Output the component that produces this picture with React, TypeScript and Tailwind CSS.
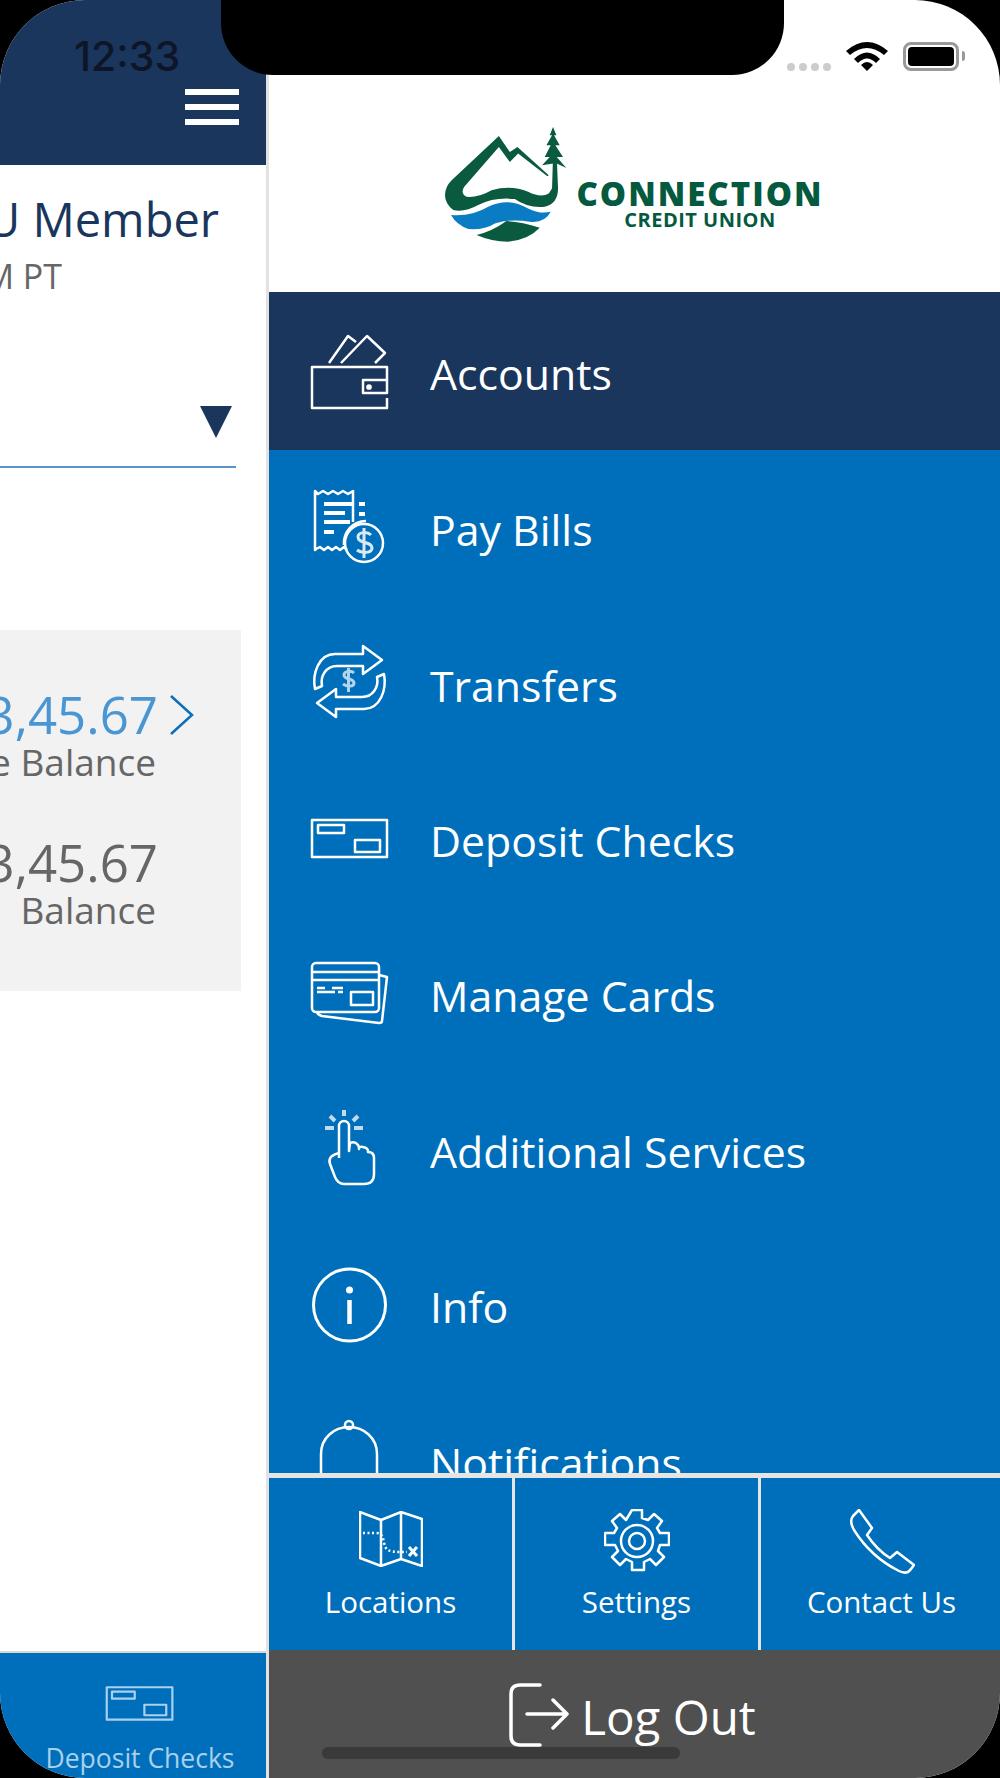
const openSans = { fontFamily: '"Open Sans", "Noto Sans", sans-serif' }

function Icon({ children, className = 'w-20 h-20' }: { children: React.ReactNode; className?: string }) {
  return (
    <svg viewBox="0 0 80 80" fill="none" stroke="currentColor" strokeWidth="2.5" strokeLinejoin="round" className={`${className} shrink-0 overflow-visible`} aria-hidden="true">
      {children}
    </svg>
  )
}

function WalletIcon() {
  return (
    <Icon>
      <path d="M77 49V36H2v41h75V67" />
      <path d="M53 49h24v13H53z" />
      <circle cx="59" cy="56" r="1.6" fill="currentColor" />
      <path d="M19 32 38 5l8 6M31 32 57 5l18 17-10 10" />
    </Icon>
  )
}

function BillIcon() {
  return (
    <Icon>
      <path d="M37 62l-3-3-4 3-4-3-4 3-4-3-4 3-4-3-4 2-1 1V3l3 3 5-3 5 3 5-3 5 3 5-3 5 3 5-3v31" />
      <path strokeWidth="4" d="M14 16h28M49 16h6M14 25h21M49 26h6M14 34h26M14 44h10" />
      <path d="M56 33a22 22 0 0 0-22 24" />
      <circle cx="54" cy="55" r="19" />
      <path strokeWidth="3" opacity="0.85" d="M61 47c-4-4-13-3-13 2 0 7 14 4 14 11 0 5-10 6-15 2M54 40v30" />
    </Icon>
  )
}

function TransferIcon() {
  const arrow = 'M5 44C2 28 9 9 25 9h28V1l19 14-19 14v-8H27c-11 0-17 10-15 20z'
  return (
    <Icon>
      <g transform="translate(0 2)">
        <path d={arrow} />
        <path d={arrow} transform="rotate(180 39.5 36.5)" />
        <path strokeWidth="3" opacity="0.7" d="M44 28c-3-3-10-2-10 2 0 5 10 3 10 8 0 4-7 4-11 1M38.500 23v24" />
      </g>
    </Icon>
  )
}

function EnvelopeIcon({ className }: { className?: string }) {
  return (
    <Icon className={className}>
      <path d="M2 22h75v37H2zM8 27h26v8H8zM45 42h25v12H45z" />
    </Icon>
  )
}

function CardsIcon() {
  return (
    <Icon>
      <g transform="translate(0 2)">
        <rect x="2" y="7" width="67" height="49" rx="4" />
        <path d="M2 16h67M2 24h67M41 36h22v13H41zM7 32h8M22 32h11M7 36h18M28 36h5" />
        <path d="M69 19l8 2-5 44q0 2-3 2L12 60q-4-1-5-4" />
      </g>
    </Icon>
  )
}

function TapIcon() {
  return (
    <Icon>
      <g transform="translate(0 1)">
        <path d="M29 48V16a5 5 0 0 1 10 0v25l1-8q5-2 8 2 1 1 1 4 0-3 4-2 5 1 5 4v1q6 0 6 6v16q0 10-10 10H34q-6 0-9-7l-5-13q-3-8 9-11" />
        <path strokeWidth="4" opacity="0.75" d="M34 0v6M15 18h9M44 18h9M20 6l5 5M48 6l-5 5" />
      </g>
    </Icon>
  )
}

function InfoIcon() {
  return (
    <Icon>
      <circle cx="39.500" cy="40" r="36" strokeWidth="3" />
      <circle cx="39.500" cy="25" r="3.500" fill="currentColor" stroke="none" />
      <path strokeWidth="4.500" d="M39.500 35v24" />
    </Icon>
  )
}

function BellIcon() {
  return (
    <Icon>
      <circle cx="39" cy="5" r="4" />
      <path d="M11 62V34C11 18 24 7 39 7s28 11 28 27v28" />
      <path d="M5 70q6-3 6-8M73 70q-6-3-6-8M5 70h68" />
    </Icon>
  )
}

function MapIcon() {
  return (
    <svg viewBox="0 0 64 56" fill="none" stroke="currentColor" strokeWidth="2.500" strokeLinejoin="round" className="w-16 h-14" aria-hidden="true">
      <path d="M1 1l21 8 20-8 21 7v47l-21-7-20 7-21-8zM22 9v46M42 1v47" />
      <path strokeDasharray="2 2.500" d="M4 22h13c8 0 7 8 9 13 2 7 12 6 22 6" />
      <path strokeWidth="3" d="M50 36l8 9M58 36l-8 9" />
    </svg>
  )
}

function GearIcon() {
  return (
    <svg viewBox="0 0 66 66" fill="none" stroke="currentColor" strokeWidth="2.500" strokeLinejoin="round" className="w-[66px] h-[66px]" aria-hidden="true">
      <path d="M28 1h10v8l6 2 6-6 8 7-5 7 3 5h9v12h-9l-2 6 6 6-8 8-6-6-6 3v8H28v-8l-6-3-6 6-8-8 6-6-3-6H1V24h9l3-5-5-7 8-7 6 6z" />
      <circle cx="33" cy="32" r="16" />
      <circle cx="33" cy="32" r="8" />
    </svg>
  )
}

function PhoneIcon() {
  return (
    <svg viewBox="0 0 66 66" fill="none" stroke="currentColor" strokeWidth="2.500" strokeLinejoin="round" className="w-[66px] h-[66px]" aria-hidden="true">
      <path d="M10 1L4 7Q0 12 5 21Q22 48 50 62Q58 66 62 60L65 56 48 43 41 49Q28 41 18 26L23 19z" />
    </svg>
  )
}

function Logo() {
  return (
    <div className="flex items-end text-[#04593f]">
      <svg viewBox="50 50 370 350" className="w-[123px] h-[117px]" aria-hidden="true">
        <path fill="#0a5a40" d="M212 82 245 130 268 115 362 200 358 203 270 135 245 160 212 115 108 235Q95 255 115 265 150 268 190 245 250 228 300 250 340 270 362 255L372 240 375 140H386L390 240Q390 285 350 295 300 300 260 272 200 265 150 290 110 312 75 305 50 285 50 260 50 235 70 215Z" />
        <path fill="#0a7cc4" d="M68 320Q130 325 180 295 240 265 300 300 335 318 368 310 350 345 305 340 250 330 200 345 170 365 120 362 85 350 68 320Z" />
        <path fill="#0a5a40" d="M145 380Q190 370 235 338 280 340 335 358 300 395 240 400 190 400 145 380Z" />
        <path fill="#0a5a40" d="M375 55 385 80H378L395 110H382L405 145H386L415 178 386 165H376L342 170 365 145H350L368 110H355L372 80H365Z" />
      </svg>
      <div className="flex flex-col items-center ml-[8px] mb-[11px]" style={openSans}>
        <span className="text-[33px] leading-[31px] font-extrabold tracking-[2px]">CONNECTION</span>
        <span className="text-[20px] leading-[22px] font-bold tracking-[0.5px]">CREDIT UNION</span>
      </div>
    </div>
  )
}

const menuItems = [
  { label: 'Pay Bills', icon: <BillIcon /> },
  { label: 'Transfers', icon: <TransferIcon /> },
  { label: 'Deposit Checks', icon: <EnvelopeIcon className="w-20 h-20" /> },
  { label: 'Manage Cards', icon: <CardsIcon /> },
  { label: 'Additional Services', icon: <TapIcon /> },
  { label: 'Info', icon: <InfoIcon /> },
  { label: 'Notifications', icon: <BellIcon /> },
]

function MenuRow({ label, icon, className }: { label: string; icon: React.ReactNode; className: string }) {
  return (
    <div className={`flex items-center gap-[40px] pl-[41px] text-white shrink-0 ${className}`}>
      {icon}
      <span className="text-[42.800px] leading-none whitespace-nowrap pt-[6px]">{label}</span>
    </div>
  )
}

function AccountPanel() {
  return (
    <div className="w-[269px] h-full shrink-0 flex flex-col border-r-[3px] border-[#e2e2e2] bg-white overflow-hidden">
      <div className="h-[165px] shrink-0 bg-[#1a365d] flex flex-col items-end gap-[9px] pt-[89px] pr-[27px]">
        <div className="w-[54px] h-[6px] bg-white" />
        <div className="w-[54px] h-[6px] bg-white" />
        <div className="w-[54px] h-[6px] bg-white" />
      </div>
      <div className="flex-1 flex flex-col items-end min-h-0">
        <div className="mt-[26px] pr-[47px] text-[47px] leading-[56px] text-[#1a365d] whitespace-nowrap shrink-0">Hello CU Member</div>
        <div className="mt-[9px] pr-[204px] text-[34px] leading-[40px] text-[#666666] whitespace-nowrap shrink-0">Last login 12:33 PM PT</div>
        <div className="mt-[110px] w-full h-[62px] shrink-0 border-b-2 border-[#5b93c6] flex justify-end mr-[30px] pr-[4px]">
          <svg viewBox="0 0 32 32" className="w-[32px] h-[32px]" aria-hidden="true">
            <path fill="#1a365d" d="M0 0h32L16 32z" />
          </svg>
        </div>
        <div className="mt-[162px] w-[241px] self-start h-[361px] shrink-0 bg-[#f2f2f2] flex flex-col items-end pt-[54px] pr-[85px]">
          <div className="relative text-[51px] leading-[60px] text-[#4a96d2] whitespace-nowrap -mr-[2px]">
            $123,45.67
            <svg viewBox="0 0 24 40" fill="none" stroke="#0a6fbb" strokeWidth="2.500" className="absolute left-full top-[11px] ml-[12px] w-[24px] h-[40px]" aria-hidden="true">
              <path d="M1 1l21 19L1 39" />
            </svg>
          </div>
          <div className="text-[37px] leading-[36px] text-[#666666] whitespace-nowrap">Available Balance</div>
          <div className="mt-[52px] text-[51px] leading-[60px] text-[#666666] whitespace-nowrap -mr-[2px]">$123,45.67</div>
          <div className="text-[37px] leading-[36px] text-[#666666] whitespace-nowrap">Balance</div>
        </div>
      </div>
      <div className="h-[127px] shrink-0 bg-[#006fbb] border-t-2 border-[#d8d8d8] flex flex-col items-center pl-[14px] text-[#a9d0ec]">
        <EnvelopeIcon className="w-[70px] h-[70px] mt-[15px] -mb-[2px]" />
        <span className="text-[26.500px] leading-[34px] whitespace-nowrap mt-[5px]">Deposit Checks</span>
      </div>
    </div>
  )
}

function DrawerPanel() {
  return (
    <div className="flex-1 min-w-0 h-full flex flex-col bg-white">
      <div className="h-[292px] shrink-0 flex items-end justify-center pb-[50px]">
        <Logo />
      </div>
      <div className="h-[1181px] shrink-0 flex flex-col overflow-hidden bg-[#006fbb]">
        <MenuRow label="Accounts" icon={<WalletIcon />} className="h-[158px] bg-[#1a365d]" />
        {menuItems.map((item) => (
          <MenuRow key={item.label} label={item.label} icon={item.icon} className="h-[155.4px]" />
        ))}
      </div>
      <div className="h-[177px] shrink-0 flex bg-[#006fbb] border-t-[5px] border-[#e5e5e5] text-white text-[29.500px] leading-[36px]">
        <div className="w-[246px] flex flex-col items-center pt-[33px] gap-[17px] border-r-[3px] border-[#e5e5e5]">
          <MapIcon />
          <span>Locations</span>
        </div>
        <div className="w-[246px] flex flex-col items-center pt-[31px] gap-[9px] border-r-[3px] border-[#e5e5e5]">
          <GearIcon />
          <span>Settings</span>
        </div>
        <div className="flex-1 flex flex-col items-center pt-[31px] gap-[9px] pl-[2px]">
          <PhoneIcon />
          <span>Contact Us</span>
        </div>
      </div>
      <div className="flex-1 bg-[#505050] text-white flex items-start justify-center pt-[27px] gap-[12px] pr-[4px]">
        <svg viewBox="0 0 60 64" fill="none" stroke="currentColor" strokeWidth="3.500" strokeLinecap="round" strokeLinejoin="round" className="w-[60px] h-[64px] mt-[6px]" aria-hidden="true">
          <path d="M31 2H11Q2 2 2 11v42q0 9 9 9h20M18 31h40M44 17l14 14-14 14" />
        </svg>
        <span className="text-[47.500px] leading-[70px] mt-[5px]">Log Out</span>
      </div>
    </div>
  )
}

function StatusBar() {
  return (
    <>
      <div className="absolute left-[221px] top-0 w-[563px] h-[75px] bg-black rounded-b-[52px]" />
      <div className="absolute left-[74px] top-[33px] text-[41px] leading-[46px] font-medium text-[#0d1526]" style={{ fontFamily: 'Inter, sans-serif' }}>12:33</div>
      <div className="absolute left-[787px] top-[41px] flex items-center gap-[15px]">
        <div className="flex gap-[4px] mt-[21px]">
          <div className="w-2 h-2 rounded-sm bg-[#cccccc]" />
          <div className="w-2 h-2 rounded-sm bg-[#cccccc]" />
          <div className="w-2 h-2 rounded-sm bg-[#cccccc]" />
          <div className="w-2 h-2 rounded-sm bg-[#cccccc]" />
        </div>
        <svg viewBox="0 0 42 30" className="w-[42px] h-[30px]" aria-hidden="true">
          <path fill="#000" d="M0 10Q21-8 42 10l-4 4Q21 0 4 14z" />
          <path fill="#000" d="M8 18Q21 5 34 18l-4 4Q21 13 12 22z" />
          <path fill="#000" d="M15 24Q21 18 27 24l-6 6z" />
        </svg>
        <div className="flex items-center gap-[3px]">
          <div className="w-[56px] h-[29px] p-[2px] rounded-[8px] border-[3px] border-[#999999]">
            <div className="w-full h-full rounded-[4px] bg-black" />
          </div>
          <div className="w-[3px] h-[10px] rounded-r bg-[#999999]" />
        </div>
      </div>
      <div className="absolute left-[322px] top-[1747px] w-[358px] h-[12px] rounded-full bg-[#3a3a3a]" />
    </>
  )
}

export default function App() {
  return (
    <div className="w-[1000px] h-[1778px] bg-black" style={openSans}>
      <div className="relative w-full h-full rounded-[85px] overflow-hidden flex">
        <AccountPanel />
        <DrawerPanel />
        <StatusBar />
      </div>
    </div>
  )
}
